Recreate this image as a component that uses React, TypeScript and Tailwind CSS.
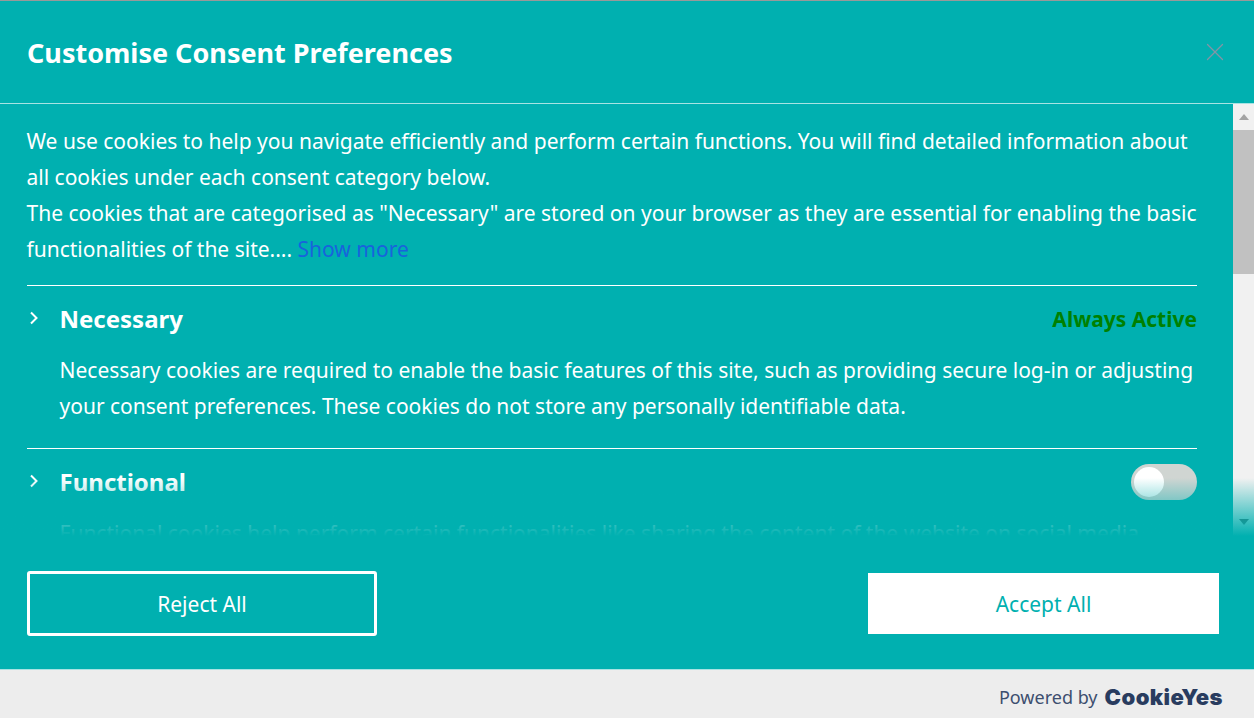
import { X } from 'lucide-react';

const FONT = "font-['Noto_Sans',sans-serif]";

function Chevron() {
  return (
    <svg width="14" height="16" viewBox="0 0 14 16" fill="none" className="-mt-[3px]">
      <path d="M4 2.5L9.5 8L4 13.5" stroke="white" strokeWidth="2" />
    </svg>
  );
}

export default function App() {
  return (
    <div className={`${FONT} w-[1254px] h-[718px] overflow-hidden flex flex-col bg-[#00b0b0] text-white border-t border-[#999999]`}>
      {/* header */}
      <div className="h-[102px] shrink-0 flex items-center justify-between pl-[27px] pr-[24px] border-b border-[#a8e3e3] box-content">
        <h1 className="text-[27px] font-bold leading-none">Customise Consent Preferences</h1>
        <X size={30} strokeWidth={1.05} className="text-[#8494a5] -mt-[1px]" />
      </div>

      {/* scrolling body */}
      <div className="relative h-[432px] shrink-0 flex overflow-hidden">
        <div className="w-[1233px] pl-[27px] pr-[36px] pt-[19px]">
          <p className="text-[21px] leading-[36px] -ml-[0.5px] -mr-[3px]">
            We use cookies to help you navigate efficiently and perform certain functions. You will find detailed information about all cookies under each consent category below.
            <br />
            The cookies that are categorised as "Necessary" are stored on your browser as they are essential for enabling the basic functionalities of the site.... <span className="text-[#1863dc]">Show more</span>
          </p>

          <div className="mt-[18px] border-t border-white pt-[15px] h-[163px]">
            <div className="flex items-center justify-between h-[36px]">
              <div className="flex items-center">
                <Chevron />
                <span className="ml-[18.5px] text-[24px] font-bold">Necessary</span>
              </div>
              <span className="pt-[2px] text-[21px] font-bold text-[#008000]">Always Active</span>
            </div>
            <p className="mt-[15px] ml-[32.5px] text-[21px] leading-[36px]">
              Necessary cookies are required to enable the basic features of this site, such as providing secure log-in or adjusting your consent preferences. These cookies do not store any personally identifiable data.
            </p>
          </div>

          <div className="border-t border-white pt-[15px]">
            <div className="flex items-center justify-between h-[36px]">
              <div className="flex items-center">
                <Chevron />
                <span className="ml-[18.5px] text-[24px] font-bold">Functional</span>
              </div>
              <div className="w-[66px] h-[36px] rounded-full bg-[#d0d5d2] pl-[3px] flex items-center">
                <div className="w-[30px] h-[30px] rounded-full bg-white" />
              </div>
            </div>
            <p className="mt-[15px] ml-[32.5px] text-[21px] leading-[36px] whitespace-nowrap">
              Functional cookies help perform certain functionalities like sharing the content of the website on social media
            </p>
          </div>
        </div>

        {/* scrollbar */}
        <div className="w-[21px] shrink-0 bg-[#f1f1f1] flex flex-col items-center">
          <div className="h-[26px] w-full flex items-center justify-center">
            <div className="w-0 h-0 border-x-[5px] border-x-transparent border-b-[6px] border-b-[#a3a3a3]" />
          </div>
          <div className="w-full h-[144px] bg-[#c1c1c1]" />
          <div className="mt-auto h-[22px] w-full flex items-center justify-center pb-[6px]">
            <div className="w-0 h-0 border-x-[5px] border-x-transparent border-t-[6px] border-t-[#505050]" />
          </div>
        </div>

        {/* fade over the bottom of the body */}
        <div className="absolute left-0 right-0 bottom-0 h-[58px] bg-gradient-to-b from-[#00b0b000] to-[#00b0b0]" />
      </div>

      {/* buttons */}
      <div className="h-[133px] shrink-0 flex items-center justify-between pl-[27px] pr-[35px] pt-[1px]">
        <button className="w-[350px] h-[65px] border-[3px] border-white rounded-[3px] text-[21px] pt-[3px]">Reject All</button>
        <button className="w-[351px] h-[61px] bg-white text-[#00b0b0] text-[21px] pt-[3px]">Accept All</button>
      </div>

      {/* powered by */}
      <div className="flex-1 bg-[#ededed] border-t border-[#a8e3e3] flex items-center justify-end pr-[31px] pt-[6px]">
        <span className="text-[18px] text-[#3d4f6f]">Powered by</span>
        <span className="ml-[7px] text-[22px] font-black tracking-[0.45px] text-[#293c5f] font-['Inter',sans-serif]">
          CookieYes
        </span>
      </div>
    </div>
  );
}
